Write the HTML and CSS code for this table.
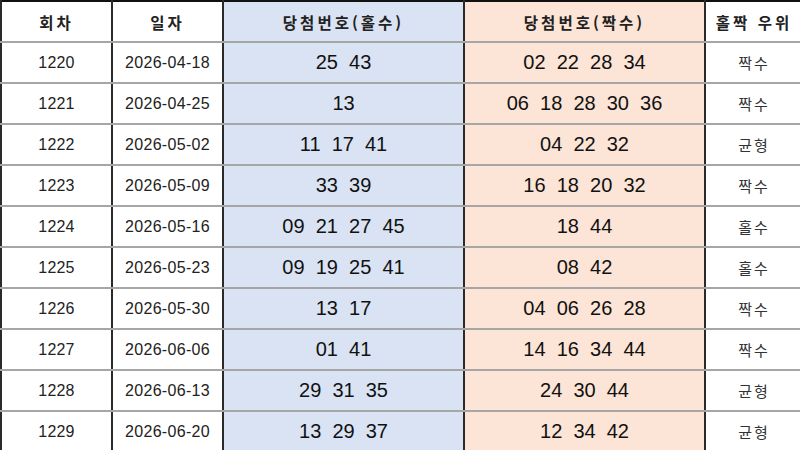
FILE: index.html
```html
<!DOCTYPE html>
<html lang="ko">
<head>
<meta charset="utf-8">
<link rel="stylesheet" href="styles.css">
</head>
<body>
<table class="lotto">
  <colgroup>
    <col class="c1"><col class="c2"><col class="c3"><col class="c4"><col class="c5">
  </colgroup>
  <thead>
    <tr>
      <th>회차</th><th>일자</th><th class="odd">당첨번호(홀수)</th><th class="even">당첨번호(짝수)</th><th>홀짝 우위</th>
    </tr>
  </thead>
  <tbody>
    <tr><td class="id">1220</td><td class="date">2026-04-18</td><td class="odd num">25&nbsp;&nbsp;43</td><td class="even num">02&nbsp;&nbsp;22&nbsp;&nbsp;28&nbsp;&nbsp;34</td><td class="res">짝수</td></tr>
    <tr><td class="id">1221</td><td class="date">2026-04-25</td><td class="odd num">13</td><td class="even num">06&nbsp;&nbsp;18&nbsp;&nbsp;28&nbsp;&nbsp;30&nbsp;&nbsp;36</td><td class="res">짝수</td></tr>
    <tr><td class="id">1222</td><td class="date">2026-05-02</td><td class="odd num">11&nbsp;&nbsp;17&nbsp;&nbsp;41</td><td class="even num">04&nbsp;&nbsp;22&nbsp;&nbsp;32</td><td class="res">균형</td></tr>
    <tr><td class="id">1223</td><td class="date">2026-05-09</td><td class="odd num">33&nbsp;&nbsp;39</td><td class="even num">16&nbsp;&nbsp;18&nbsp;&nbsp;20&nbsp;&nbsp;32</td><td class="res">짝수</td></tr>
    <tr><td class="id">1224</td><td class="date">2026-05-16</td><td class="odd num">09&nbsp;&nbsp;21&nbsp;&nbsp;27&nbsp;&nbsp;45</td><td class="even num">18&nbsp;&nbsp;44</td><td class="res">홀수</td></tr>
    <tr><td class="id">1225</td><td class="date">2026-05-23</td><td class="odd num">09&nbsp;&nbsp;19&nbsp;&nbsp;25&nbsp;&nbsp;41</td><td class="even num">08&nbsp;&nbsp;42</td><td class="res">홀수</td></tr>
    <tr><td class="id">1226</td><td class="date">2026-05-30</td><td class="odd num">13&nbsp;&nbsp;17</td><td class="even num">04&nbsp;&nbsp;06&nbsp;&nbsp;26&nbsp;&nbsp;28</td><td class="res">짝수</td></tr>
    <tr><td class="id">1227</td><td class="date">2026-06-06</td><td class="odd num">01&nbsp;&nbsp;41</td><td class="even num">14&nbsp;&nbsp;16&nbsp;&nbsp;34&nbsp;&nbsp;44</td><td class="res">짝수</td></tr>
    <tr><td class="id">1228</td><td class="date">2026-06-13</td><td class="odd num">29&nbsp;&nbsp;31&nbsp;&nbsp;35</td><td class="even num">24&nbsp;&nbsp;30&nbsp;&nbsp;44</td><td class="res">균형</td></tr>
    <tr><td class="id">1229</td><td class="date">2026-06-20</td><td class="odd num">13&nbsp;&nbsp;29&nbsp;&nbsp;37</td><td class="even num">12&nbsp;&nbsp;34&nbsp;&nbsp;42</td><td class="res">균형</td></tr>
  </tbody>
</table>
</body>
</html>
```
FILE: styles.css
```css
html, body {
  margin: 0;
  padding: 0;
  background: #ffffff;
}
body {
  font-family: "Liberation Sans", "Noto Sans CJK KR", sans-serif;
  color: #1a1a1a;
  overflow: hidden;
}
.lotto {
  border-collapse: collapse;
  table-layout: fixed;
  width: 802px;
  border-top: 2px solid #111;
  border-left: 2px solid #111;
}
.c1 { width: 111px; }
.c2 { width: 111px; }
.c3 { width: 241px; }
.c4 { width: 241px; }
.c5 { width: 98px; }
.lotto th, .lotto td {
  border-left: 2px solid #2a2a2a;
  border-right: 2px solid #2a2a2a;
  border-bottom: 2px solid #a6a6a6;
  text-align: center;
  padding: 0;
  height: 39px;
}
.lotto th {
  font-family: "Noto Sans CJK KR", sans-serif;
  font-weight: 700;
  font-size: 15.5px;
  letter-spacing: 3px;
  height: 39px;
  color: #222;
}
.lotto td {
  color: #222;
}
.lotto td.id {
  font-size: 16px;
  letter-spacing: 0.2px;
}
.lotto td.date {
  font-size: 16px;
  letter-spacing: 0.3px;
}
.lotto td.num {
  font-size: 20px;
  color: #111;
}
.lotto td.res {
  font-family: "Noto Sans CJK KR", sans-serif;
  font-size: 15px;
  letter-spacing: 2px;
  color: #333;
}
.odd { background: #dae3f3; }
.even { background: #fce4d6; }
```
